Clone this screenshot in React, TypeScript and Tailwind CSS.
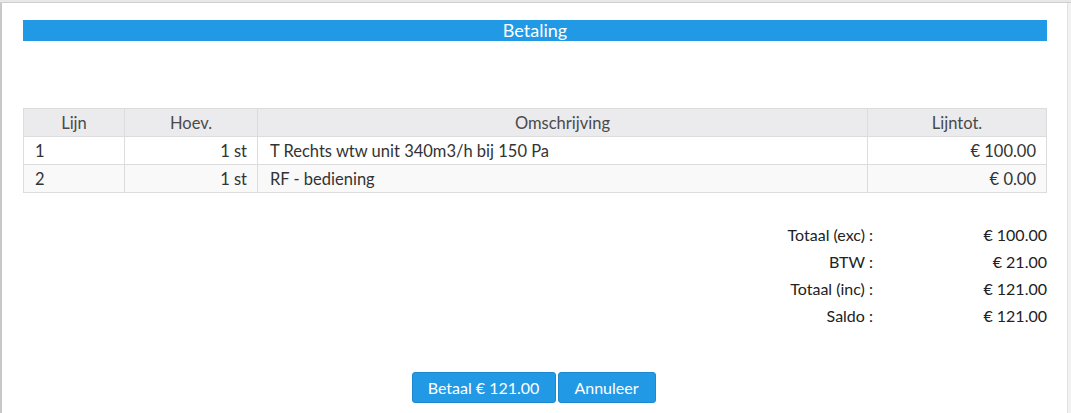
import React from 'react';

const lines = [
    { nr: '1', qty: '1 st', desc: 'T Rechts wtw unit 340m3/h bij 150 Pa', total: '€ 100.00' },
    { nr: '2', qty: '1 st', desc: 'RF - bediening', total: '€ 0.00' },
];

const totals = [
    { label: 'Totaal (exc) :', value: '€ 100.00' },
    { label: 'BTW :', value: '€ 21.00' },
    { label: 'Totaal (inc) :', value: '€ 121.00' },
    { label: 'Saldo :', value: '€ 121.00' },
];

export default function App() {
    return (
        <div
            className="w-[1071px] h-[413px] flex flex-col bg-[#ececec] overflow-hidden text-[#333]"
            style={{ fontFamily: 'Lato, "Open Sans", sans-serif' }}
        >
            <div className="h-[3px] bg-[#e8e8e8] border-b border-[#cfcfcf]" />
            <div className="flex flex-1">
                <div className="w-[2px] bg-[#c8c8c8]" />
                <div className="flex-1 bg-white pt-[17px] pl-[21px] pr-[20px] flex flex-col">
                    {/* Title bar */}
                    <div className="h-[21px] bg-[#2299e5] text-white text-[18px] leading-[21px] text-center">
                        Betaling
                    </div>

                    {/* Lines */}
                    <table className="mt-[67px] w-full border-collapse text-[16.5px] leading-[20px] table-fixed">
                        <colgroup>
                            <col className="w-[101px]" />
                            <col className="w-[133px]" />
                            <col />
                            <col className="w-[179px]" />
                        </colgroup>
                        <thead>
                            <tr className="bg-[#ebebee] text-[#4a4a4a] h-[28px]">
                                <th className="border border-[#dcdcdc] font-normal text-center">Lijn</th>
                                <th className="border border-[#dcdcdc] font-normal text-center">Hoev.</th>
                                <th className="border border-[#dcdcdc] font-normal text-center">Omschrijving</th>
                                <th className="border border-[#dcdcdc] font-normal text-center">Lijntot.</th>
                            </tr>
                        </thead>
                        <tbody>
                            {lines.map((l, i) => (
                                <tr key={l.nr} className={`h-[28px] ${i % 2 === 1 ? 'bg-[#f9f9f9]' : 'bg-white'}`}>
                                    <td className="border border-[#dcdcdc] px-[11px]">{l.nr}</td>
                                    <td className="border border-[#dcdcdc] px-[10px] text-right">{l.qty}</td>
                                    <td className="border border-[#dcdcdc] px-[12px]">{l.desc}</td>
                                    <td className="border border-[#dcdcdc] px-[10px] text-right">{l.total}</td>
                                </tr>
                            ))}
                        </tbody>
                    </table>

                    {/* Totals */}
                    <div className="mt-[28px] flex flex-col text-[16px] text-[#222]">
                        {totals.map(t => (
                            <div key={t.label} className="flex justify-end h-[27px] items-center">
                                <span className="text-right">{t.label}</span>
                                <span className="w-[174px] text-right">{t.value}</span>
                            </div>
                        ))}
                    </div>

                    {/* Actions */}
                    <div className="mt-[43px] flex justify-center gap-[2px] pr-[3px]">
                        <button className="h-[31px] w-[144px] bg-[#2299e5] border border-[#1b88cf] rounded-[3px] text-white text-[16px]">
                            Betaal € 121.00
                        </button>
                        <button className="h-[31px] w-[98px] bg-[#2299e5] border border-[#1b88cf] rounded-[3px] text-white text-[16px]">
                            Annuleer
                        </button>
                    </div>
                </div>
                <div className="w-[4px] bg-[#f2f2f2] border-l border-[#e2e2e2]" />
            </div>
        </div>
    );
}
